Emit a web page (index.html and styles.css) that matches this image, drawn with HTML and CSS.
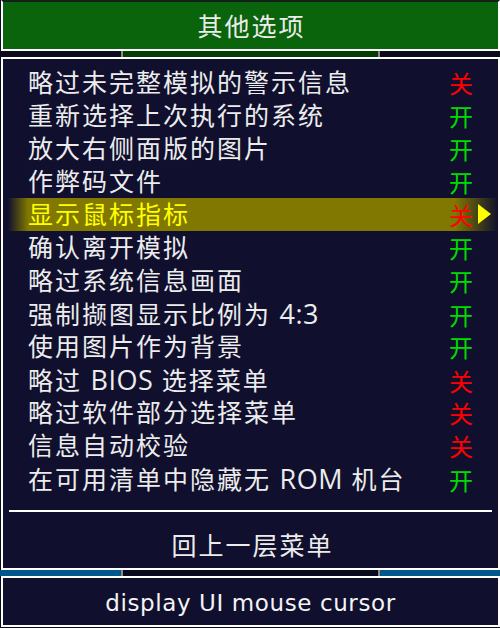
FILE: index.html
```html
<!DOCTYPE html>
<html lang="zh-CN">
<head>
<meta charset="utf-8">
<title>其他选项</title>
<link rel="stylesheet" href="styles.css">
</head>
<body>
<div class="screen">
  <header class="box title-box">
    <div class="title">其他选项</div>
  </header>
  <div class="gap gap-top"><span class="side"></span><span class="mid"></span><span class="side"></span></div>
  <main class="box menu-box">
    <ul class="items">
      <li class="item"><span class="label">略过未完整模拟的警示信息</span><span class="val off">关</span><span class="arrow"></span></li>
      <li class="item"><span class="label">重新选择上次执行的系统</span><span class="val on">开</span><span class="arrow"></span></li>
      <li class="item"><span class="label">放大右侧面版的图片</span><span class="val on">开</span><span class="arrow"></span></li>
      <li class="item"><span class="label">作弊码文件</span><span class="val on">开</span><span class="arrow"></span></li>
      <li class="item selected"><span class="label">显示鼠标指标</span><span class="val off">关</span><span class="arrow"><svg width="13" height="20" viewBox="0 0 13 20"><polygon points="0,0 13,10 0,20" fill="#ffff00"/></svg></span></li>
      <li class="item"><span class="label">确认离开模拟</span><span class="val on">开</span><span class="arrow"></span></li>
      <li class="item"><span class="label">略过系统信息画面</span><span class="val on">开</span><span class="arrow"></span></li>
      <li class="item"><span class="label">强制撷图显示比例为 <span class="lat">4:3</span></span><span class="val on">开</span><span class="arrow"></span></li>
      <li class="item"><span class="label">使用图片作为背景</span><span class="val on">开</span><span class="arrow"></span></li>
      <li class="item"><span class="label">略过 <span class="lat">BIOS</span> 选择菜单</span><span class="val off">关</span><span class="arrow"></span></li>
      <li class="item"><span class="label">略过软件部分选择菜单</span><span class="val off">关</span><span class="arrow"></span></li>
      <li class="item"><span class="label">信息自动校验</span><span class="val off">关</span><span class="arrow"></span></li>
      <li class="item"><span class="label">在可用清单中隐藏无 <span class="lat">ROM</span> 机台</span><span class="val on">开</span><span class="arrow"></span></li>
    </ul>
    <div class="sep"></div>
    <div class="back">回上一层菜单</div>
  </main>
  <div class="gap gap-bottom"><span class="side"></span><span class="mid"></span><span class="side"></span></div>
  <footer class="box status-box">
    <div class="status">display UI mouse cursor</div>
  </footer>
</div>
</body>
</html>
```
FILE: styles.css
```css
* { box-sizing: border-box; }
html, body {
  margin: 0;
  padding: 0;
  background: #0b0b1c;
}
body {
  width: 500px;
  height: 628px;
  overflow: hidden;
  font-family: "Open Sans", "Noto Sans CJK SC", sans-serif;
  color: #ececec;
}
.screen {
  display: flex;
  flex-direction: column;
  width: 500px;
}
.box {
  margin-left: 1px;
  width: 499px;
  border: 2px solid #ffffff;
}
.title-box {
  background: #0a640b;
  border-top-color: #12201a;
  height: 51px;
  display: flex;
  align-items: center;
  justify-content: center;
}
.title {
  font-size: 25px;
  letter-spacing: 2px;
  line-height: 33px;
  margin-top: 1px;
  margin-left: 2px;
}
.gap {
  height: 6px;
  display: grid;
  grid-template-columns: 121px 259px 1fr;
}
.gap-top .side { background: #0b0b1c; }
.gap-top .mid { background: #053c06; border-left: 2px solid #8a8a8a; border-right: 2px solid #8a8a8a; }
.gap-bottom .side { background: #00588a; }
.gap-bottom .mid { background: #0a0a1e; border-left: 2px solid #8a8a8a; border-right: 2px solid #8a8a8a; }
.menu-box {
  background: #10102e;
  height: 513px;
  padding: 7px 0 6px 0;
}
.items {
  list-style: none;
  margin: 0 0 0 5px;
  padding: 0;
}
.item {
  display: grid;
  grid-template-columns: 1fr 28px 21px;
  align-items: center;
  height: 33px;
  padding-left: 20px;
}
.label {
  font-size: 25px;
  letter-spacing: 2px;
  line-height: 33px;
  white-space: nowrap;
}
.lat {
  font-size: 27px;
  letter-spacing: 0.5px;
}
.val {
  font-family: "Noto Sans CJK SC", sans-serif;
  font-size: 24px;
  line-height: 33px;
}
.val.on { color: #00dc00; }
.val.off { color: #ff0000; }
.arrow {
  display: flex;
  align-items: center;
  height: 33px;
  padding-left: 1px;
}
.arrow svg { margin-bottom: 1px; }
.item.selected {
  background: linear-gradient(to right, rgba(128,120,0,0) 0px, #807800 20px, #807800 calc(100% - 43px), rgba(128,120,0,0) 100%);
}
.item.selected .label { color: #ffff00; }
.sep {
  height: 2px;
  background: #ffffff;
  margin: 15px 6px 0 6px;
}
.back {
  margin-top: 17px;
  height: 33px;
  line-height: 33px;
  text-align: center;
  font-size: 25px;
  letter-spacing: 2px;
  padding-left: 4px;
}
.status-box {
  background: #10102e;
  height: 51px;
  display: flex;
  align-items: center;
  justify-content: center;
}
.status {
  font-family: "DejaVu Sans", sans-serif;
  font-size: 23px;
  letter-spacing: 0.6px;
  line-height: 30px;
  margin-top: 2px;
  color: #f4f4f4;
}
```
